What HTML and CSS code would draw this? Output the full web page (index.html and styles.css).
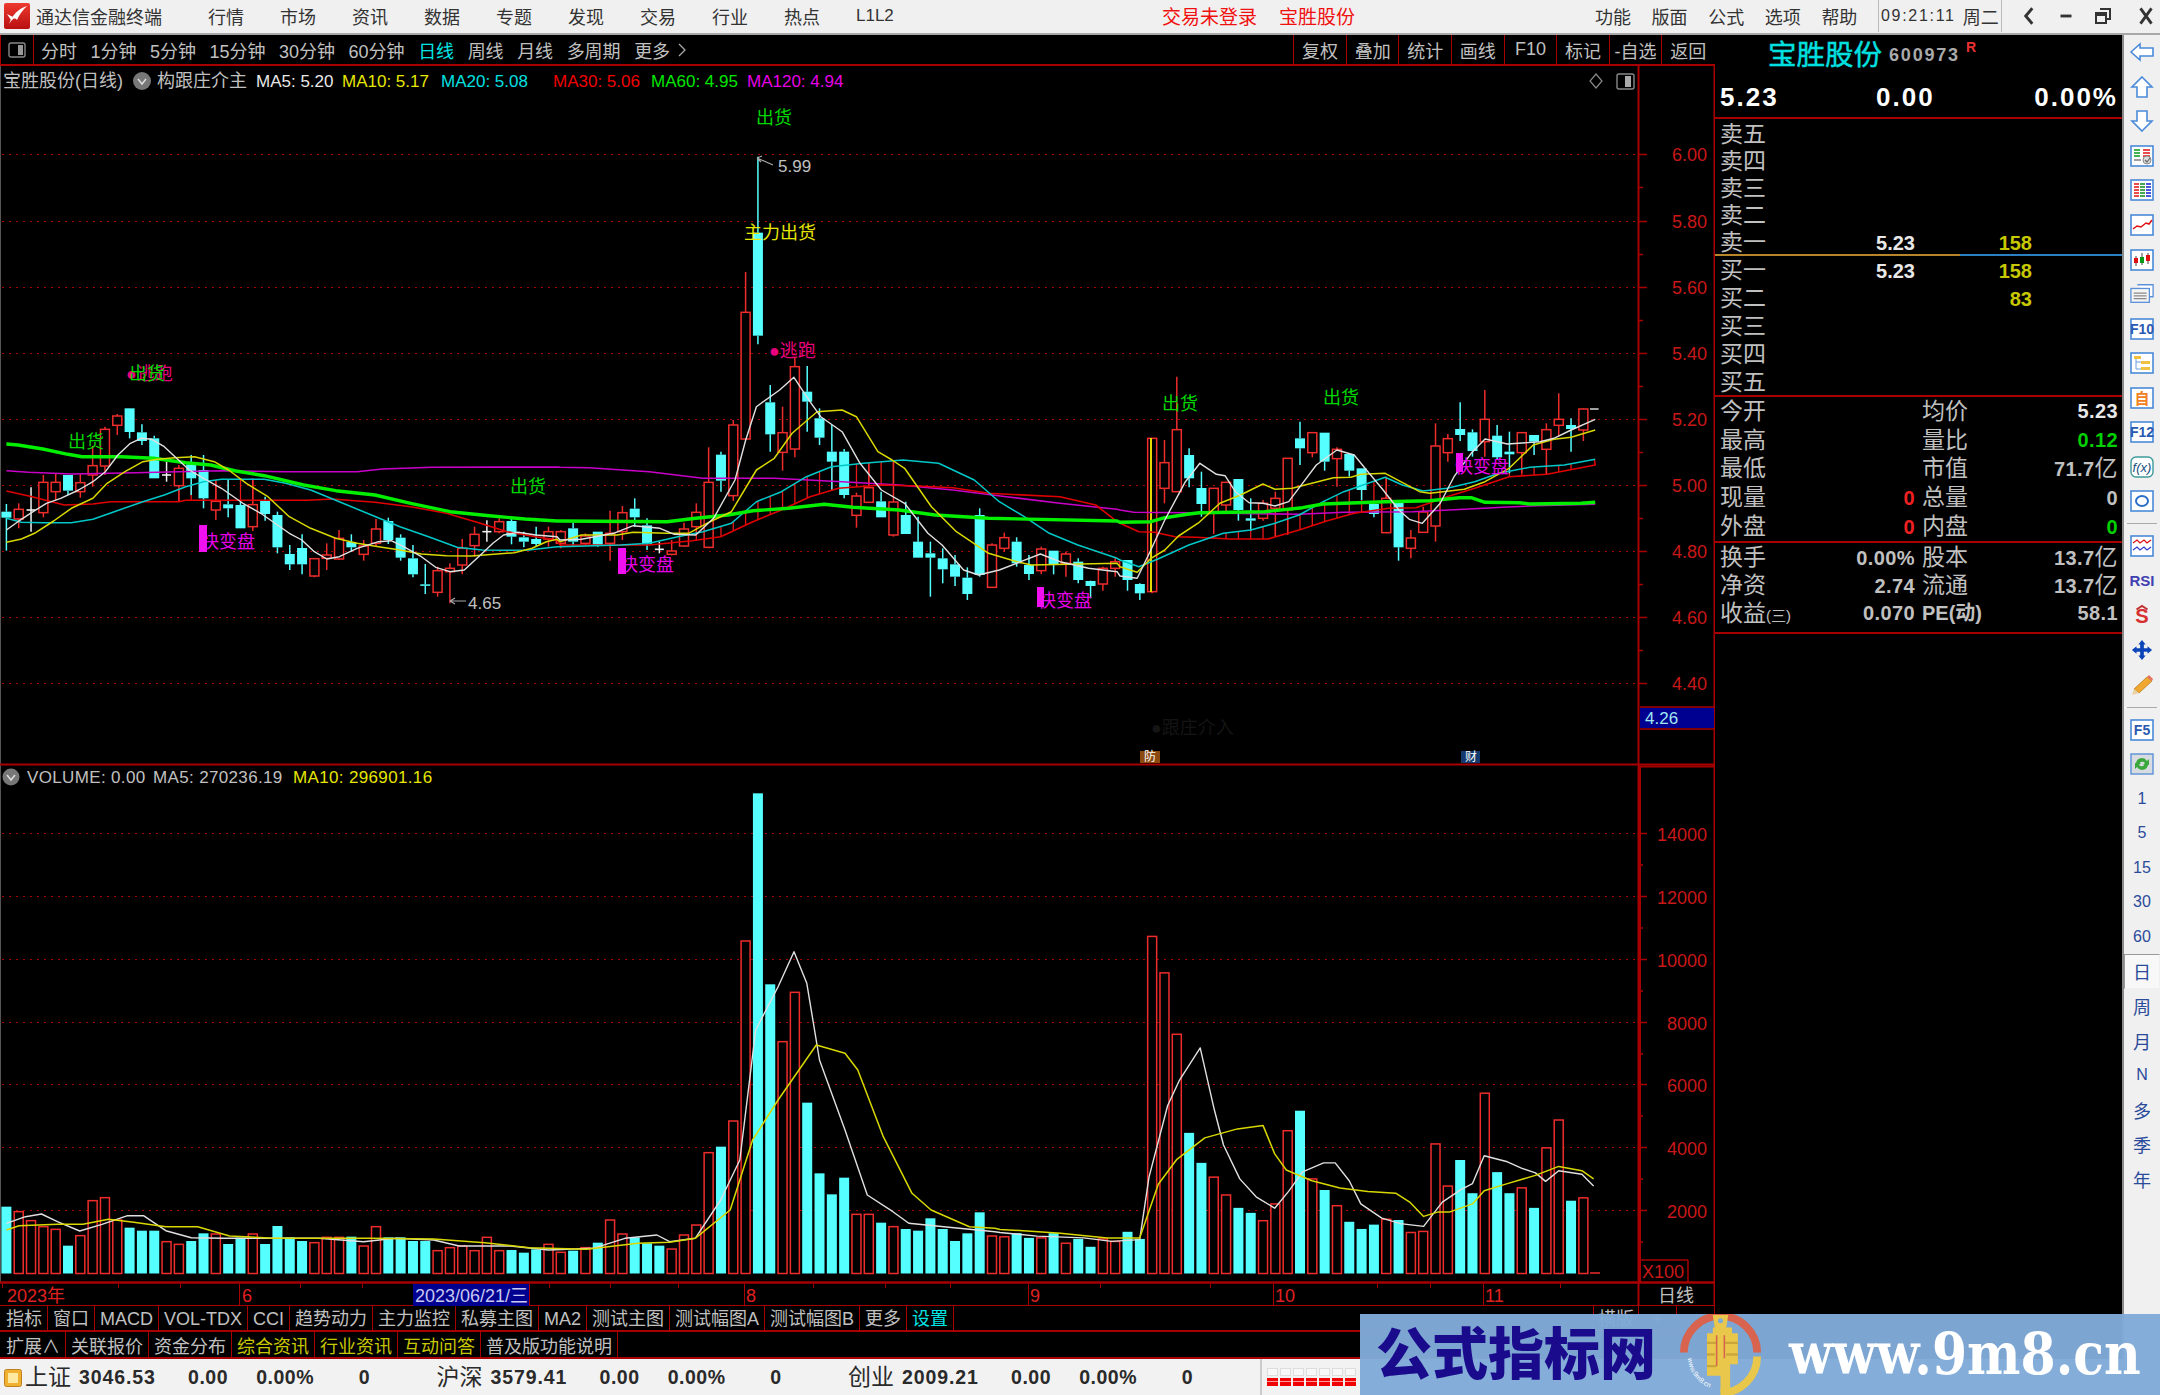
FILE: index.html
```html
<!DOCTYPE html>
<html lang="zh-CN">
<head>
<meta charset="utf-8">
<title>通达信金融终端</title>
<link rel="stylesheet" href="styles.css">
</head>
<body>
<div class="app">
  <header class="titlebar">
    <svg class="logo" viewBox="0 0 26 26"><defs><linearGradient id="lg" x1="0" y1="0" x2="0" y2="1"><stop offset="0" stop-color="#ee3a30"/><stop offset="1" stop-color="#b80f10"/></linearGradient></defs><rect width="26" height="26" rx="2" fill="url(#lg)"/><path d="M5 21 C8 12 14 6 23 3 C18 8 15 12 13 17 C11 14 8 16 5 21Z" fill="#fff"/><path d="M3 11 L9 14 L7 17Z" fill="#fff"/></svg>
    <span class="apptitle">通达信金融终端</span>
    <nav class="menu"><span>行情</span><span>市场</span><span>资讯</span><span>数据</span><span>专题</span><span>发现</span><span>交易</span><span>行业</span><span>热点</span><span>L1L2</span></nav>
    <div class="alert"><span>交易未登录</span><span>宝胜股份</span></div>
    <nav class="menu2"><span>功能</span><span>版面</span><span>公式</span><span>选项</span><span>帮助</span></nav>
    <div class="clock"><span>09:21:11</span><span>周二</span></div>
    <div class="winctl">
      <svg viewBox="0 0 16 20"><path d="M11 3 L5 10 L11 17" class="wc"/></svg>
      <svg viewBox="0 0 16 20"><path d="M3 10 H13" class="wc"/></svg>
      <svg viewBox="0 0 18 20"><path d="M6 3 H16 V13 H13 M2 7 H12 V17 H2Z M2 9 H12" class="wc thin"/></svg>
      <svg class="wc-x" viewBox="0 0 16 20"><path d="M3 3 L13 17 M13 3 L3 17" class="wc"/></svg>
    </div>
  </header>

  <main class="workspace">
    <section class="chartcol">
      <div class="toolbar">
        <div class="tb-left">
          <span class="tb-toggle"><svg viewBox="0 0 18 16"><rect x="1" y="1" width="16" height="14" rx="2" class="tg-o"/><rect x="10" y="3" width="5" height="10" class="tg-f"/></svg></span>
          <span class="tb-item">分时</span><span class="tb-item">1分钟</span><span class="tb-item">5分钟</span><span class="tb-item">15分钟</span><span class="tb-item">30分钟</span><span class="tb-item">60分钟</span><span class="tb-item on">日线</span><span class="tb-item">周线</span><span class="tb-item">月线</span><span class="tb-item">多周期</span><span class="tb-item">更多 <svg class="chev" viewBox="0 0 8 16"><path d="M1 2 L7 8 L1 14"/></svg></span>
        </div>
        <div class="tb-right"><span>复权</span><span>叠加</span><span>统计</span><span>画线</span><span>F10</span><span>标记</span><span>-自选</span><span>返回</span></div>
      </div>

      <svg id="chart" class="chart" viewBox="0 66 1715 1240" width="1715" height="1240">
        <g id="plot"></g>
        <!-- header, price pane -->
        <text class="t-gray mid" x="3" y="81">宝胜股份(日线)</text>
        <circle cx="142" cy="81" r="9" fill="#777"/><path d="M138 79 L142 84 L146 79" fill="none" stroke="#ddd" stroke-width="1.6"/>
        <text class="t-gray mid" x="157" y="81">构跟庄介主</text>
        <text class="t-white mid sm" x="256" y="81">MA5: 5.20</text>
        <text class="t-yellow mid sm" x="342" y="81">MA10: 5.17</text>
        <text class="t-cyan mid sm" x="441" y="81">MA20: 5.08</text>
        <text class="t-red mid sm" x="553" y="81">MA30: 5.06</text>
        <text class="t-green mid sm" x="651" y="81">MA60: 4.95</text>
        <text class="t-mag mid sm" x="747" y="81">MA120: 4.94</text>
        <path d="M1596 74 L1602 81 L1596 88 L1590 81Z" fill="none" stroke="#888" stroke-width="1.2"/>
        <rect x="1617" y="74" width="17" height="15" rx="2" fill="none" stroke="#888" stroke-width="1.4"/><rect x="1625" y="76" width="6" height="11" fill="#aaa"/>

        <text class="t-sig mid" x="756" y="118">出货</text>
        <text class="t-gray mid sm" x="778" y="166">5.99</text>
        <path d="M757 158 L773 165 M757 158 L762 156 M757 158 L761 162" fill="none" stroke="#aaa" stroke-width="1.2"/>
        <text class="t-yel2 mid" x="744" y="233">主力出货</text>
        <text class="t-pink mid" x="769" y="351">●逃跑</text>
        <text class="t-pink mid" x="126" y="374">●逃跑</text>
        <text class="t-sig mid" x="129" y="374">出货</text>
        <text class="t-sig mid" x="68" y="442">出货</text>
        <text class="t-sig mid" x="510" y="487">出货</text>
        <text class="t-sig mid" x="1162" y="404">出货</text>
        <text class="t-sig mid" x="1323" y="398">出货</text>
        <text class="t-gray mid sm" x="468" y="603">4.65</text>
        <path d="M450 601 H466 M450 601 L455 598 M450 601 L455 604" fill="none" stroke="#aaa" stroke-width="1.2"/>

        <text class="t-mag mid" x="201" y="542">快变盘</text><rect x="199" y="525" width="8" height="27" fill="#f010f0"/>
        <text class="t-mag mid" x="620" y="565">快变盘</text><rect x="618" y="548" width="8" height="26" fill="#f010f0"/>
        <text class="t-mag mid" x="1038" y="601">快变盘</text><rect x="1037" y="587" width="7" height="20" fill="#f010f0"/>
        <text class="t-mag mid" x="1455" y="467">快变盘</text><rect x="1456" y="453" width="7" height="19" fill="#f010f0"/>

        <text class="t-faint mid" x="1151" y="728">●跟庄介入</text>
        <rect x="1140" y="751" width="20" height="12" fill="#8a4a10"/><text class="t-tiny mid" x="1144" y="757">防</text>
        <rect x="1461" y="751" width="19" height="12" fill="#123a6e"/><text class="t-tiny mid" x="1465" y="757">财</text>

        <!-- price axis labels -->
        <g class="axis-labels">
          <text x="1707" y="155">6.00</text><text x="1707" y="222">5.80</text><text x="1707" y="288">5.60</text><text x="1707" y="354">5.40</text><text x="1707" y="420">5.20</text><text x="1707" y="486">5.00</text><text x="1707" y="552">4.80</text><text x="1707" y="618">4.60</text><text x="1707" y="684">4.40</text>
        </g>
        <rect x="1640" y="708" width="74" height="20" fill="#000090"/>
        <text class="t-cur mid sm" x="1645" y="718">4.26</text>

        <!-- volume pane -->
        <circle cx="11" cy="777" r="8.5" fill="#777"/><path d="M7 775 L11 780 L15 775" fill="none" stroke="#ddd" stroke-width="1.6"/>
        <text class="t-gray mid sm vh" x="27" y="777">VOLUME: 0.00</text>
        <text class="t-gray mid sm vh" x="153" y="777">MA5: 270236.19</text>
        <text class="t-yellow mid sm vh" x="293" y="777">MA10: 296901.16</text>
        <g class="axis-labels">
          <text x="1707" y="835">14000</text><text x="1707" y="898">12000</text><text x="1707" y="961">10000</text><text x="1707" y="1024">8000</text><text x="1707" y="1086">6000</text><text x="1707" y="1149">4000</text><text x="1707" y="1212">2000</text>
        </g>
        <text class="axis-x mid" x="1642" y="1272">X100</text>

        <!-- date axis -->
        <rect x="413" y="1284" width="116" height="22" fill="#000090"/>
        <text class="t-date mid" x="7" y="1296">2023年</text>
        <text class="t-date mid" x="242" y="1296">6</text>
        <text class="t-datesel mid" x="415" y="1296">2023/06/21/三</text>
        <text class="t-date mid" x="746" y="1296">8</text>
        <text class="t-date mid" x="1030" y="1296">9</text>
        <text class="t-date mid" x="1275" y="1296">10</text>
        <text class="t-date mid" x="1485" y="1296">11</text>
        <text class="t-gray mid" x="1658" y="1296">日线</text>
      </svg>

      <div class="tabs">
        <span>指标</span><span>窗口</span><span>MACD</span><span>VOL-TDX</span><span>CCI</span><span>趋势动力</span><span>主力监控</span><span>私募主图</span><span>MA2</span><span>测试主图</span><span>测试幅图A</span><span>测试幅图B</span><span>更多</span><span class="on">设置</span>
        <span class="tabs-end">横版</span><span class="plain">+</span><span class="plain"></span>
      </div>
      <div class="tabs">
        <span>扩展∧</span><span>关联报价</span><span>资金分布</span><span class="hl">综合资讯</span><span class="hl">行业资讯</span><span class="hl">互动问答</span><span>普及版功能说明</span>
      </div>
    </section>

    <aside class="quote">
      <div class="q-name"><b>宝胜股份</b><i>600973</i><sup>R</sup></div>
      <div class="q-price"><b>5.23</b><b>0.00</b><b>0.00%</b></div>
      <div class="book sell">
        <div><span>卖五</span></div><div><span>卖四</span></div><div><span>卖三</span></div><div><span>卖二</span></div>
        <div><span>卖一</span><b>5.23</b><em>158</em></div>
      </div>
      <div class="midline"></div>
      <div class="book buy">
        <div><span>买一</span><b>5.23</b><em>158</em></div>
        <div><span>买二</span><b></b><em>83</em></div>
        <div><span>买三</span></div><div><span>买四</span></div><div><span>买五</span></div>
      </div>
      <div class="stats five">
        <div><span>今开</span><b></b><span>均价</span><b class="w">5.23</b></div>
        <div><span>最高</span><b></b><span>量比</span><b class="g">0.12</b></div>
        <div><span>最低</span><b></b><span>市值</span><b>71.7<small>亿</small></b></div>
        <div><span>现量</span><b class="r">0</b><span>总量</span><b>0</b></div>
        <div><span>外盘</span><b class="r">0</b><span>内盘</span><b class="g">0</b></div>
      </div>
      <div class="stats three">
        <div><span>换手</span><b>0.00%</b><span>股本</span><b>13.7<small>亿</small></b></div>
        <div><span>净资</span><b>2.74</b><span>流通</span><b>13.7<small>亿</small></b></div>
        <div><span>收益<small class="paren">(三)</small></span><b>0.070</b><span class="pe">PE(动)</span><b>58.1</b></div>
      </div>
    </aside>

    <aside class="sidebar">
      <div class="si"><svg viewBox="0 0 24 20"><path class="arr" d="M1 10 L10 2 V6 H23 V14 H10 V18Z"/></svg></div>
      <div class="si"><svg viewBox="0 0 24 22"><path class="arr" d="M12 1 L22 11 H17 V21 H7 V11 H2Z"/></svg></div>
      <div class="si"><svg viewBox="0 0 24 22"><path class="arr" d="M12 21 L22 11 H17 V1 H7 V11 H2Z"/></svg></div>
      <div class="si"><svg viewBox="0 0 24 22"><rect class="fr" x="1" y="1" width="22" height="20"/><path d="M4 5 H10 M4 8 H10 M4 11 H10" stroke="#0a9a1a" stroke-width="1.6"/><path d="M13 5 H20 M13 8 H20 M13 11 H20" stroke="#e01010" stroke-width="1.6"/><path d="M4 15 H11" stroke="#888" stroke-width="1.6"/><circle cx="17" cy="15" r="4" fill="#ddd" stroke="#888"/><path d="M15 15 L17 17 L20 13" fill="none" stroke="#666" stroke-width="1.2"/></svg></div>
      <div class="si"><svg viewBox="0 0 24 22"><rect class="fr" x="1" y="1" width="22" height="20"/><path d="M4 5 H9 M4 8 H9 M4 11 H9 M4 14 H9 M4 17 H9" stroke="#e01010" stroke-width="1.6"/><path d="M10 5 H15 M10 8 H15 M10 11 H15 M10 14 H15 M10 17 H15" stroke="#0a8a1a" stroke-width="1.6"/><path d="M16 5 H21 M16 8 H21 M16 11 H21 M16 14 H21 M16 17 H21" stroke="#1020d0" stroke-width="1.6"/></svg></div>
      <div class="si"><svg viewBox="0 0 24 22"><rect class="fr" x="1" y="1" width="22" height="20"/><path d="M3 15 L7 12 L11 13 L16 9 L19 10 L22 6" fill="none" stroke="#e01010" stroke-width="1.5"/></svg></div>
      <div class="si"><svg viewBox="0 0 24 22"><rect class="fr" x="1" y="1" width="22" height="20"/><path d="M6 7 V17 M12 4 V16 M18 4 V15" stroke="#444"/><rect x="4" y="9" width="4" height="5" fill="#e01010"/><rect x="10" y="8" width="4" height="6" fill="#0a9a1a"/><rect x="16" y="6" width="4" height="6" fill="#e01010"/></svg></div>
      <div class="si"><svg viewBox="0 0 26 22"><path d="M8 1 H25 V14 H21" fill="#fff" stroke="#5a90d8" stroke-width="1.4"/><rect x="1" y="5" width="20" height="15" fill="#f4f4f4" stroke="#5a90d8" stroke-width="1.4"/><path d="M4 10 H18 M4 13 H18 M4 16 H18" stroke="#888" stroke-width="1.4"/></svg></div>
      <div class="si"><svg viewBox="0 0 24 22"><rect class="fr" x="1" y="1" width="22" height="20"/><text class="ti-t" x="12" y="16">F10</text></svg></div>
      <div class="si"><svg viewBox="0 0 24 22"><rect class="fr" x="1" y="1" width="22" height="20"/><path d="M6 5 V17 H11 M6 10 H11" fill="none" stroke="#6aa0d8"/><rect x="4" y="4" width="7" height="3" fill="#f0c040"/><rect x="11" y="9" width="9" height="3" fill="#f0c040"/><rect x="11" y="15" width="9" height="3" fill="#f0c040"/></svg></div>
      <div class="si"><svg viewBox="0 0 24 22"><rect class="fr" x="1" y="1" width="22" height="20"/><text class="ti-o" x="12" y="17">自</text></svg></div>
      <div class="si"><svg viewBox="0 0 24 22"><rect class="fr" x="1" y="1" width="22" height="20"/><text class="ti-t" x="12" y="16">F12</text></svg></div>
      <div class="si"><svg viewBox="0 0 24 22"><rect x="1" y="1" width="22" height="20" rx="5" fill="#fff" stroke="#3f9a9a" stroke-width="1.4"/><text class="ti-f" x="12" y="16">f(x)</text></svg></div>
      <div class="si"><svg viewBox="0 0 24 22"><rect class="fr" x="1" y="1" width="22" height="20"/><ellipse cx="12" cy="11" rx="6" ry="5" fill="none" stroke="#2a70c8" stroke-width="2"/></svg></div>
      <div class="sep"></div>
      <div class="si"><svg viewBox="0 0 24 22"><rect class="fr" x="1" y="1" width="22" height="20"/><path d="M3 8 L7 5 L10 8 L14 5 L17 8 L21 5" fill="none" stroke="#e01010" stroke-width="1.3"/><path d="M3 15 L7 12 L10 15 L14 12 L17 15 L21 12" fill="none" stroke="#3040d0" stroke-width="1.3"/></svg></div>
      <div class="si"><span class="rsi">RSI</span></div>
      <div class="si"><svg viewBox="0 0 24 24"><text class="ti-s" x="12" y="20">S</text><path d="M6 5 L12 1 L18 5" fill="none" stroke="#c03030" stroke-width="2"/></svg></div>
      <div class="si"><svg viewBox="0 0 24 24"><path d="M12 1 L16 6 H14 V10 H18 V8 L23 12 L18 16 V14 H14 V18 H16 L12 23 L8 18 H10 V14 H6 V16 L1 12 L6 8 V10 H10 V6 H8Z" fill="#0a44b8"/></svg></div>
      <div class="si"><svg viewBox="0 0 24 22"><path d="M4 15 L17 3 L22 7 L9 19Z" fill="#f0a830" stroke="#b8801e" stroke-width=".8"/><path d="M4 15 L2 21 L9 19Z" fill="#e8d0a0"/><path d="M17 3 L22 7 L23 5 L19 1Z" fill="#e87060"/></svg></div>
      <div class="sep"></div>
      <div class="si"><svg viewBox="0 0 24 22"><rect class="fr" x="1" y="1" width="22" height="20"/><text class="ti-t" x="12" y="16">F5</text></svg></div>
      <div class="si"><svg viewBox="0 0 24 22"><rect x="1" y="1" width="22" height="20" fill="#d8dce0" stroke="#5a90d8" stroke-width="1.4"/><path d="M6 10 A6 6 0 0 1 17 8 L19 6 V12 H13 L15 10 A3.5 3.5 0 0 0 9 11Z M18 12 A6 6 0 0 1 7 14 L5 16 V10 H11 L9 12 A3.5 3.5 0 0 0 15 11Z" fill="#3aa83a"/></svg></div>
      <div class="si tx">1</div><div class="si tx">5</div><div class="si tx">15</div><div class="si tx">30</div><div class="si tx">60</div>
      <div class="si tx cj sel">日</div><div class="si tx cj">周</div><div class="si tx cj">月</div><div class="si tx">N</div><div class="si tx cj">多</div><div class="si tx cj">季</div><div class="si tx cj">年</div>
    </aside>
  </main>

  <footer class="statusbar">
    <svg class="st-ico" viewBox="0 0 18 18"><rect x="0.5" y="0.5" width="17" height="17" rx="2" fill="#f0b030" stroke="#c08020"/><rect x="4" y="4" width="10" height="10" fill="#ffe9a0"/></svg>
    <div class="idx"><span>上证</span><b>3046.53</b><b>0.00</b><b>0.00%</b><b>0</b></div>
    <div class="idx"><span>沪深</span><b>3579.41</b><b>0.00</b><b>0.00%</b><b>0</b></div>
    <div class="idx"><span>创业</span><b>2009.21</b><b>0.00</b><b>0.00%</b><b>0</b></div>
    <div class="meter">
      <div class="m-row"><i></i><i></i><i></i><i></i><i></i><i></i><i></i></div>
      <div class="m-row red"><i></i><i></i><i></i><i></i><i></i><i></i><i></i></div>
    </div>
  </footer>

  <div class="watermark">
    <span class="wm-cn">公式指标网</span>
    <svg class="wm-logo" viewBox="0 0 84 84">
      <path d="M4 40 A38 38 0 0 1 80 40" fill="none" stroke="#d8634e" stroke-width="8"/>
      <path d="M80 44 A38 38 0 0 1 42 82" fill="none" stroke="#e8c74a" stroke-width="8"/>
      <defs><path id="wmarc" d="M8 46 A36 36 0 0 0 36 78"/></defs>
      <text class="wm-small"><textPath href="#wmarc">www.9m8.cn</textPath></text>
      <path d="M34 1 H50 L48 14 H54 V20 H60 V52 H52 V82 H42 V64 H28 V20 H34 V14 H36Z" fill="#e8c74a"/>
      <circle cx="42" cy="7" r="2.6" fill="#80aad8"/>
      <path d="M28 30 H38 M46 30 H60 M28 42 H36 M48 42 H60 M28 54 H38" stroke="#c9a63a" stroke-width="2.4"/>
      <path d="M38 22 V54 M46 22 V46" stroke="#d8634e" stroke-width="1.6"/>
    </svg>
    <span class="wm-url">www.9m8.cn</span>
  </div>
</div>
<script src="chart.js"></script>
</body>
</html>
```

FILE: styles.css
```css
* { box-sizing: border-box; }
html, body { margin: 0; padding: 0; background: #000; }
body {
  width: 2160px; height: 1395px; overflow: hidden;
  font-family: "Liberation Sans", "Noto Sans CJK SC", sans-serif;
  font-size: 18px; color: #c0c0c0;
}
.app { position: relative; width: 2160px; height: 1395px; display: flex; flex-direction: column; }

/* title bar */
.titlebar { height: 35px; flex: none; background: #f0f0f0; border-bottom: 2px solid #a8a8a8; display: flex; align-items: center; color: #333; padding: 0 0 2px 4px; }
.logo { width: 26px; height: 26px; flex: none; }
.apptitle { margin-left: 6px; width: 172px; flex: none; }
.menu { display: flex; align-items: center; flex: none; width: 954px; }
.menu span { width: 72px; }
.menu span:last-child { font-size: 17px; }
.alert { display: flex; gap: 22px; color: #f01010; width: 433px; flex: none; }
.alert span { font-size: 19px; }
.menu2 { display: flex; width: 283px; flex: none; }
.menu2 span { width: 57px; }
.clock { display: flex; align-items: center; height: 33px; width: 124px; flex: none; border-left: 1px solid #bbb; border-right: 1px solid #bbb; padding-left: 2px; gap: 7px; }
.clock span:first-child { font-size: 16px; letter-spacing: 1.7px; }
.winctl { display: flex; align-items: center; margin-left: 18px; gap: 19px; }
.winctl svg { width: 18px; height: 22px; }
.winctl .wc-x { margin-left: 6px; }
.wc { fill: none; stroke: #333; stroke-width: 2.6; }
.wc.thin { stroke-width: 2; }

/* layout */
.workspace { flex: none; height: 1324px; display: flex; background: #000; }
.chartcol { width: 1715px; flex: none; display: flex; flex-direction: column; }

/* toolbar */
.toolbar { height: 31px; flex: none; display: flex; justify-content: space-between; border-bottom: 2px solid #a80000; border-left: 1px solid #a80000; }
.tb-left { display: flex; align-items: center; }
.tb-toggle { width: 33px; height: 100%; border-right: 1px solid #a80000; display: flex; align-items: center; justify-content: center; margin-right: 7px; }
.tb-toggle svg { width: 18px; height: 16px; }
.tg-o { fill: none; stroke: #888; stroke-width: 1.4; }
.tg-f { fill: #999; }
.tb-item { margin-right: 13.5px; white-space: nowrap; display: flex; align-items: center; gap: 8px; }
.tb-item.on { color: #00e6e6; }
.chev { width: 8px; height: 16px; fill: none; stroke: #aaa; stroke-width: 1.3; }
.tb-right { display: flex; height: 100%; margin-right: 1px; }
.tb-right span { width: 52.6px; border-left: 1px solid #a80000; display: flex; align-items: center; justify-content: center; }

/* chart */
.chart { display: block; flex: none; font-size: 18px; }
.chart text.mid { dominant-baseline: central; }
.chart .sm { font-size: 17px; }
.chart .vh { letter-spacing: .35px; }
.t-gray { fill: #c0c0c0; }
.t-white { fill: #e8e8e8; }
.t-yellow { fill: #e6e600; }
.t-cyan { fill: #00e0e0; }
.t-red { fill: #f00000; }
.t-green { fill: #00e600; }
.t-mag { fill: #e600e6; }
.t-sig { fill: #00d800; }
.t-yel2 { fill: #e6e600; }
.t-pink { fill: #e8007c; }
.t-faint { fill: #141414; }
.t-tiny { fill: #fff; font-size: 12px; }
.t-cur { fill: #a0e8f0; }
.t-date { fill: #e02020; }
.t-datesel { fill: #c8c8f0; }
.axis-labels text { fill: #c81818; text-anchor: end; dominant-baseline: central; font-size: 18px; }
.axis-x { fill: #c81818; }

/* bottom tabs */
.tabs { height: 26px; flex: none; display: flex; border-bottom: 2px solid #a80000; padding-left: 1px; line-height: 27px; }
.tabs + .tabs { height: 27px; line-height: 30px; }
.tabs span { padding: 0 5px; border-right: 1px solid #a80000; white-space: nowrap; }
.tabs .on { color: #00e6e6; }
.tabs .hl { color: #c8c800; }
.tabs .tabs-end { margin-left: auto; border-left: 1px solid #a80000; padding: 0 4px; }
.tabs .plain { width: 38px; text-align: center; }

/* quote panel */
.quote { width: 407px; flex: none; display: flex; flex-direction: column; font-size: 23px; }
.q-name { height: 40px; flex: none; display: flex; align-items: center; padding: 0 0 5px 53px; }
.q-name b { font-weight: 400; font-size: 28.5px; color: #00e0e0; -webkit-text-stroke: .4px #00e0e0; }
.q-name i { font-style: normal; font-weight: 700; font-size: 18px; letter-spacing: 1.8px; color: #aaa; margin-left: 7px; margin-top: 6px; }
.q-name sup { font-size: 14px; font-weight: 700; color: #e83030; margin-left: 6px; margin-top: -12px; }
.q-price { height: 44px; flex: none; display: grid; grid-template-columns: 156px 1fr auto; align-items: center; padding: 2px 4px 0 5px; border-bottom: 2px solid #a80000; }
.q-price b { font-size: 26px; color: #fff; letter-spacing: 2px; }
.book { flex: none; display: flex; flex-direction: column; padding-left: 5px; }
.book > div { flex: 1; display: grid; grid-template-columns: 60px 135px 117px; align-items: center; line-height: 1; }
.sell > div { padding-top: 4px; }
.buy > div { padding-top: 2px; }
.book b { font-size: 20px; color: #e8e8e8; text-align: right; }
.book em { font-size: 20px; font-weight: 700; font-style: normal; color: #c8c800; text-align: right; }
.sell { height: 135px; }
.buy { height: 139px; }
.midline { height: 2px; flex: none; background: linear-gradient(to right, #b8862a 0 245px, #2a80c0 245px); }
.stats { flex: none; border-top: 2px solid #a80000; display: flex; flex-direction: column; padding: 0 4px 0 5px; }
.five { height: 146px; }
.three { height: 93px; padding-top: 1px; padding-bottom: 5px; border-bottom: 2px solid #a80000; }
.stats > div { flex: 1; display: grid; grid-template-columns: 100px 95px 7px 60px 1fr; align-items: center; line-height: 1; white-space: nowrap; }
.stats > div > :nth-child(1) { grid-column: 1; }
.stats > div > :nth-child(2) { grid-column: 2; }
.stats > div > :nth-child(3) { grid-column: 4; }
.stats > div > :nth-child(4) { grid-column: 5; }
.stats b { font-size: 20px; color: #c0c0c0; text-align: right; letter-spacing: .4px; }
.stats small { font-size: 23px; font-weight: 400; }
.stats small.paren { font-size: 15px; }
.stats .w { color: #e8e8e8; }
.stats .r { color: #f02020; }
.stats .g { color: #00d000; }
.stats .pe { font-size: 20px; font-weight: 700; }

/* side toolbar */
.sidebar { width: 38px; flex: none; background: #f0f0f0; border-left: 2px solid #8a8a8a; display: flex; flex-direction: column; align-items: center; overflow: hidden; }
.si { height: 34.55px; width: 100%; flex: none; display: flex; align-items: center; justify-content: center; }
.si svg { width: 24px; height: 22px; overflow: visible; }
.arr { fill: #fff; stroke: #4a8ad8; stroke-width: 1.6; }
.fr { fill: #fff; stroke: #4a8ad8; stroke-width: 1.6; }
.ti-t { font-size: 14px; font-weight: 700; fill: #2a5ab0; text-anchor: middle; }
.ti-o { font-size: 15px; font-weight: 700; fill: #f08020; text-anchor: middle; }
.ti-f { font-size: 13px; font-style: italic; fill: #205080; text-anchor: middle; }
.ti-s { font-size: 22px; font-weight: 700; fill: #d83030; text-anchor: middle; }
.rsi { font-size: 15px; font-weight: 700; color: #4040b0; }
.sep { height: 10.5px; width: 30px; flex: none; display: flex; align-items: center; }
.sep::after { content: ""; display: block; width: 100%; height: 1px; background: #aaa; }
.tx { color: #2a4a9a; font-size: 16px; }
.cj { font-size: 18px; }
.sel { background: #f8f8f8; border: 1px solid; border-color: #999 #f0f0f0 #f0f0f0 #999; }

/* status bar */
.statusbar { flex: 1; background: #f2f2f2; display: flex; align-items: center; color: #2a2a2a; padding-left: 4px; position: relative; }
.st-ico { width: 18px; height: 18px; flex: none; margin-right: 3px; margin-top: 2px; }
.idx { width: 411.5px; flex: none; display: grid; grid-template-columns: 54px 76px 73px 86px 56px; align-items: center; }
.idx span { font-size: 23px; line-height: 1; }
.idx b { font-size: 19.5px; text-align: right; font-weight: 700; letter-spacing: .5px; }
.idx b:nth-child(2) { text-align: left; letter-spacing: .9px; }
.meter { padding-left: 5px; border-left: 2px solid #ccc; height: 36px; display: flex; flex-direction: column; justify-content: center; gap: 2px; margin-left: 0; }
.m-row { display: flex; gap: 2px; }
.m-row i { width: 11px; height: 8px; border: 1px solid #ddd; background: #f8f8f8; }
.m-row.red i { border: 0; background: linear-gradient(to bottom, #f00000 0 3px, #ff9a9a 3px 4px, #f00000 4px); }

/* watermark */
.watermark { position: absolute; left: 1360px; top: 1314px; width: 800px; height: 81px; background: rgba(128,170,216,.97); display: flex; align-items: center; overflow: hidden; }
.wm-cn { font-size: 56px; font-weight: 900; color: #1a0a8c; line-height: 1; margin-left: 16px; width: 304px; flex: none; }
.wm-logo { width: 81px; height: 81px; flex: none; }
.wm-small { font-size: 7px; fill: #fff; }
.wm-url { font-family: "DejaVu Serif", serif; font-weight: 700; font-size: 50.5px; line-height: 1; color: #fff; margin-left: 28px; white-space: nowrap; transform: scaleY(1.15); transform-origin: center; }
```

FILE: chart.js
```js
(function () {
  var NS = "http://www.w3.org/2000/svg";
  var plot = document.getElementById("plot");
  var RED = "#ee2c2c", CY = "#55ffff", GRID = "#a80000";
  function el(n, a) {
    var e = document.createElementNS(NS, n);
    for (var k in a) e.setAttribute(k, a[k]);
    plot.appendChild(e);
    return e;
  }
  function line(x1, y1, x2, y2, c, w, dash) {
    var a = { x1: x1, y1: y1, x2: x2, y2: y2, stroke: c, "stroke-width": w || 1 };
    if (dash) a["stroke-dasharray"] = dash;
    return el("line", a);
  }
  var bx = function (i) { return 6.4 + i * 12.32; };

  /* grid and axes */
  [154, 221, 287, 353, 419, 485, 551, 617, 683].forEach(function (y, i) {
    line(2, y + .5, 1638, y + .5, GRID, 1, "2 5");
    line(1638, y + .5, 1647, y + .5, GRID, 1.5);
    if (i < 8) line(1638, y + 33.5, 1643, y + 33.5, GRID, 1.5);
  });
  [834, 897, 960, 1023, 1085, 1148, 1211].forEach(function (y) {
    line(2, y - .5, 1638, y - .5, GRID, 1, "2 5");
    line(1638, y - .5, 1647, y - .5, GRID, 1.5);
    line(1638, y + 31, 1643, y + 31, GRID, 1.5);
  });
  line(.5, 66, .5, 1282, "#555", 1);
  line(1638.5, 66, 1638.5, 1306, GRID, 2);
  line(1714.5, 66, 1714.5, 1306, GRID, 2);
  line(1640, 707, 1714, 707, GRID, 1.5);
  line(1640, 729, 1714, 729, GRID, 1.5);
  line(0, 764.5, 1714, 764.5, GRID, 2);
  line(1640, 766.5, 1714, 766.5, GRID, 2);
  line(1640, 766, 1640, 1282, GRID, 2);
  line(1640, 1260, 1688, 1260, GRID, 1.5);
  line(1688, 1260, 1688, 1282, GRID, 1.5);
  line(0, 1282.5, 1714, 1282.5, GRID, 2.5);
  line(0, 1305.5, 1715, 1305.5, GRID, 1);
  [239, 413, 529, 744, 1028, 1273, 1483].forEach(function (x) { line(x + .5, 1284, x + .5, 1305, GRID, 1); });
  [2, 118, 180, 239, 300, 362, 413, 549, 610, 678, 744, 813, 885, 950, 1028, 1100, 1210, 1273, 1377, 1430, 1483, 1560].forEach(function (x) {
    line(x + .5, 1284, x + .5, 1288, GRID, 1);
  });

  /* curve data: [px = offset + v / scale] as read off the chart */
  function poly(parts) {
    var pts = [];
    parts.forEach(function (p) {
      for (var i = 0; i < p.pts.length; i += 2) {
        pts.push([p.x0 + p.pts[i] / p.sx, p.y0 + p.pts[i + 1] / p.sy]);
      }
    });
    return pts;
  }
  function Z(x0, sx, y0, sy, pts) { return { x0: x0, sx: sx, y0: y0, sy: sy, pts: pts }; }
  function A(p) { return Z(0, 2.8, 340, 3, p); }
  function B(p) { return Z(560, 2.8, 100, 3, p); }
  function C(p) { return Z(1120, 2.904, 360, 3, p); }
  function V(p) { return Z(0, 1.568, 760, 3, p); }
  function W(p) { return Z(1000, 2.148, 720, 2.8, p); }

  var ma = {
    white: poly([A([18,570,50,545,85,520,130,490,170,475,220,450,260,425,295,395,330,345,365,310,395,295,425,298,460,320,490,350,530,390,570,415,620,445,680,490,730,520,770,550,810,580,845,600,880,635,915,657,950,650,1000,625,1060,605,1095,602,1130,620,1180,650,1220,682,1260,695,1300,690,1340,650,1380,610,1410,585,1450,577,1500,585,1560,590]),
      B([0,1320,60,1318,150,1300,205,1277,280,1285,320,1303,380,1305,430,1255,490,1140,520,1020,550,920,615,870,655,832,700,905,730,950,790,995,840,1090,900,1170,965,1210,1030,1300,1070,1335,1130,1410,1172,1425,1230,1410,1290,1385,1345,1362,1400,1385,1480,1405,1560,1415]),
      C([0,648,50,655,85,580,130,480,190,365,232,310,280,343,305,347,335,395,375,428,415,430,450,438,490,425,530,370,570,315,630,270,680,285,720,335,760,385,810,450,840,478,878,490,930,430,970,350,1020,280,1060,237,1125,252,1220,245,1260,235,1310,210,1380,178])]),
    yellow: poly([A([18,607,60,597,100,578,150,543,200,505,260,475,300,430,350,395,400,365,440,358,490,353,545,350,600,365,640,390,690,430,750,470,810,530,870,565,940,595,1000,610,1060,620,1120,630,1180,642,1250,647,1320,648,1440,638,1490,625,1530,605,1560,598]),
      B([0,1325,60,1305,160,1305,205,1297,300,1300,360,1300,420,1265,480,1235,550,1110,600,1075,650,1000,720,935,790,930,830,950,890,1055,930,1080,965,1105,1040,1220,1110,1295,1200,1360,1280,1385,1320,1395,1560,1390]),
      C([0,620,50,637,90,595,130,570,170,528,230,487,290,430,350,405,415,372,450,388,500,385,620,353,670,352,700,343,770,340,870,395,900,400,1000,388,1060,365,1130,325,1200,255,1260,238,1310,232,1380,210])]),
    cyan: poly([A([18,535,60,547,120,548,200,548,260,538,320,515,400,485,460,465,520,440,570,425,620,418,740,418,800,430,870,450,950,485,1040,525,1120,560,1200,590,1280,622,1350,630,1420,631,1480,630,1560,620]),
      B([0,1340,170,1335,250,1330,330,1310,400,1295,480,1270,550,1205,620,1175,690,1130,760,1100,850,1090,960,1080,1060,1090,1160,1140,1230,1205,1300,1250,1370,1300,1450,1335,1560,1375]),
      C([0,600,55,620,110,597,200,555,300,520,380,510,450,490,520,465,590,425,650,395,770,352,820,375,880,393,950,385,1030,365,1100,340,1190,322,1290,315,1380,298])]),
    red: poly([A([18,453,90,470,180,495,260,492,310,485,500,485,520,481,860,481,930,477,1050,487,1150,500,1250,520,1340,548,1420,575,1500,590,1560,600]),
      B([0,1335,250,1335,370,1322,450,1310,540,1265,620,1230,700,1190,780,1165,900,1155,1000,1158,1100,1163,1200,1180,1400,1190,1500,1215,1560,1265]),
      C([0,490,55,515,100,517,160,530,220,532,320,537,430,537,520,510,600,483,680,460,780,445,860,443,950,410,1030,385,1130,350,1240,343,1380,315,1378,300])]),
    green: poly([A([18,312,50,315,120,327,190,343,230,350,340,350,430,355,520,368,590,375,660,393,740,407,850,435,940,452,1050,465,1150,490,1260,515,1370,527,1470,537,1560,543]),
      B([0,1263,300,1265,380,1255,470,1245,540,1232,640,1225,740,1213,820,1222,950,1230,1050,1245,1200,1255,1560,1263]),
      C([0,487,90,485,130,473,200,462,230,458,420,455,530,443,590,432,770,425,900,422,985,413,1020,413,1060,427,1160,428,1190,432,1340,430,1380,427])]),
    mag: poly([A([18,392,80,397,200,402,380,398,620,392,800,395,1000,395,1070,387,1210,382,1560,381]),
      B([0,1102,80,1103,250,1115,400,1135,600,1135,790,1145,950,1155,1100,1170,1250,1190,1400,1210,1560,1228]),
      C([0,450,40,457,200,458,520,463,650,457,850,455,1000,448,1110,442,1210,437,1380,433])])
  };
  function at(pts, x) {
    for (var i = 1; i < pts.length; i++) {
      if (x <= pts[i][0] && pts[i][0] > pts[i - 1][0]) {
        return pts[i - 1][1] + (pts[i][1] - pts[i - 1][1]) * (x - pts[i - 1][0]) / (pts[i][0] - pts[i - 1][0]);
      }
    }
    return pts[pts.length - 1][1];
  }
  function drawPoly(pts, c, w) {
    el("polyline", { points: pts.map(function (p) { return p[0].toFixed(1) + "," + p[1].toFixed(1); }).join(" "), fill: "none", stroke: c, "stroke-width": w, "stroke-linejoin": "round" });
  }

  /* hatching between the MA20 and MA30 ribbons */
  [[14, 20], [55, 72], [98, 112], [122, 127]].forEach(function (r) {
    for (var i = r[0]; i <= r[1]; i++) {
      var x = bx(i);
      line(x, at(ma.cyan, x), x, at(ma.red, x), "#e81818", 1.3);
    }
  });

  /* candles: type high bodyTop bodyBottom low */
  function candles(y0, str, first) {
    str.split(",").forEach(function (s, k) {
      var f = s.trim().split(/\s+/), t = f[0], v = f.slice(1).map(function (n) { return y0 + n / 3; });
      var x = bx(first + k), c = t === "r" ? RED : t === "c" ? CY : "#f0f0f0";
      line(x, v[0], x, v[1], c, 1.5);
      line(x, v[2], x, v[3], c, 1.5);
      if (t === "c") el("rect", { x: x - 5, y: v[1], width: 10, height: Math.max(v[2] - v[1], 1.5), fill: CY });
      else if (t === "r") el("rect", { x: x - 4.5, y: v[1], width: 9, height: v[2] - v[1], fill: "#000", stroke: RED, "stroke-width": 1.5 });
      else { line(x - 4.5, v[1], x + 4.5, v[1], c, 1.6); line(x, v[1], x, v[2], c, 1.5); }
    });
  }
  candles(340, "c 492 515 533 632,r 490 508 537 565,w 442 510 510 575,r 405 427 518 532,r 400 427 455 480,c 405 405 452 465,r 400 428 455 473,r 318 377 405 440,r 260 268 378 405,r 222 228 256 285,c 205 205 276 295,c 253 277 303 315,c 287 295 415 415,w 365 405 405 425,r 375 385 437 485,c 345 373 415 465,c 345 390 475 505,r 420 484 510 540,c 418 493 505 532,c 485 495 565 565,r 415 494 560 573,c 470 480 522 542,c 515 525 622 640,c 615 642 673 690,c 583 624 673 703,r 655 656 708 712,r 610 645 655 690,r 570 595 657 660,c 583 606 622 635,r 600 618 643 662,r 537 567 610 620,c 533 543 600 612,c 583 593 653 662,c 615 655 703 712,c 672 733 737 762,r 680 692 757 770,r 670 685 695 790,r 597 625 675 703,r 560 583 617 650,w 541 575 575 605,r 535 545 575 580,c 535 543 590 613,c 575 592 605 622,c 560 597 612 620,r 560 575 597 620", 0);
  candles(100, "r 1290 1295 1330 1345,c 1268 1285 1325 1340,r 1300 1308 1330 1335,c 1295 1295 1335 1340,r 1232 1300 1330 1382,r 1218 1238 1295 1320,c 1195 1226 1252 1280,c 1255 1276 1333 1350,w 1325 1348 1348 1360,r 1320 1353 1363 1366,r 1268 1287 1338 1340,r 1210 1237 1280 1305,r 1042 1147 1342 1345,c 1055 1064 1142 1175,r 960 975 1187 1203,r 516 637 1017 1020,c 170 398 707 733,c 855 907 1003 1055,r 920 998 1057 1112,r 770 800 1047 1072,c 798 875 905 995,c 925 955 1013 1035,c 975 1055 1085 1170,c 1047 1055 1185 1195,r 1178 1188 1246 1283,r 1090 1163 1207 1207,c 1175 1204 1252 1252,r 1080 1206 1305 1310,c 1205 1245 1302 1302,c 1250 1325 1373 1373,c 1325 1360 1373 1490,c 1345 1375 1408 1450,c 1365 1393 1430 1458,c 1402 1433 1482 1500,c 1225 1245 1425 1430,r 1330 1335 1462 1462,r 1298 1313 1345 1355,c 1312 1325 1390 1400,c 1365 1395 1422 1440,r 1340 1347 1412 1422,c 1352 1352 1395 1423,r 1355 1362 1390 1430,c 1375 1385 1440 1450,c 1442 1443 1458 1495,r 1400 1405 1452 1472,r 1370 1385 1405 1430", 45);
  candles(360, "c 600 600 660 692,c 670 672 700 720,r 235 235 695 700,r 240 308 385 430,r 50 209 395 395,c 265 285 355 382,c 335 384 432 470,r 385 385 455 522,r 365 367 435 460,c 357 357 450 482,c 415 475 482 512,r 420 430 475 482,r 395 415 445 530,r 295 295 450 525,c 185 235 265 315,r 218 218 278 292,c 218 218 305 332,r 262 268 296 380,c 280 282 332 350,c 325 325 390 420,c 430 432 462 472,r 350 415 518 520,c 425 425 562 602,r 510 534 565 595,r 440 456 517 517,r 190 258 498 545,r 222 236 278 305,c 127 207 225 243,c 208 217 273 290,r 90 178 245 290,c 195 227 292 300,c 215 275 283 340,r 218 218 278 340,c 225 225 245 285,r 190 209 268 345,r 100 178 196 228,c 175 195 207 275,r 145 147 210 243", 91);
  line(1151, 438, 1151, 592, "#e6d800", 2);
  line(1590, 409, 1598.6, 409, "#c8c8c8", 1.6);

  drawPoly(ma.mag, "#c800c8", 1.6);
  drawPoly(ma.red, "#e00000", 1.6);
  drawPoly(ma.cyan, "#00c8c8", 1.5);
  drawPoly(ma.green, "#00f000", 3.4);
  drawPoly(ma.yellow, "#d8d800", 1.5);
  drawPoly(ma.white, "#e0e0e0", 1.4);

  /* volume bars */
  var BASE = 1273.5;
  function vols(first, str, toY) {
    str.trim().split(/\s+/).forEach(function (s, k) {
      var x = bx(first + k), y = toY(+s.slice(1));
      if (s[0] === "c") el("rect", { x: x - 5, y: y, width: 10, height: BASE - y, fill: CY });
      else el("rect", { x: x - 4.5, y: y, width: 9, height: BASE - y, fill: "#000", stroke: RED, "stroke-width": 1.5 });
    });
  }
  vols(0, "c1340 r1355 r1382 r1400 r1408 c1457 r1427 r1322 r1313 r1380 c1403 c1412 c1412 r1445 r1453 c1443 c1420 r1422 c1452 c1433 r1422 c1452 c1398 c1432 c1443 r1448 r1432 r1432 c1430 r1458 r1400 c1432 c1432 c1443 c1443 r1472 r1463 r1458 r1472 r1432 r1472 c1470 c1478 c1468 r1453 r1477 c1472 r1463 c1448 r1380 r1422 c1432 c1450 c1457 r1467 r1425 r1395 r1178 c1160 r1083 r543 c100 c673 r845 r697 c1028 c1240 c1303 c1253 r1363 r1363 c1388 r1400 c1407 c1412 c1375 c1407 c1443 c1420 c1357 r1428", function (v) { return 760 + v / 3; });
  vols(81, "r1447 c1437 c1450 r1450 c1437 r1465 c1453 c1475 r1453 r1460 c1433 c1453 r606 r708 r880 c1156 c1240 r1280 r1330 c1366 c1380 r1402 r1355 r1150 c1094 r1285 c1316 r1360 c1405 c1425 c1413 r1398 c1400 r1435 r1432 r1187 r1305 c1232 c1325 r1045 c1266 c1325 r1310 c1366 r1198 r1120 c1346 r1338", function (v) { return 720 + v / 2.8; });
  line(1590, 1273, 1600, 1273, RED, 1.5);

  drawPoly(poly([V([10,1390,40,1370,65,1362,90,1385,125,1413,160,1393,200,1367,225,1367,260,1412,300,1433,350,1435,400,1435,500,1435,570,1445,620,1435,680,1440,720,1458,800,1458,860,1470,930,1465,980,1435,1030,1425,1050,1445,1090,1435,1130,1320,1160,1200,1185,810,1220,680,1245,575,1265,670,1285,900,1325,1110,1360,1305,1400,1355,1425,1390,1480,1400,1560,1415]),
    W([0,1435,80,1445,180,1450,240,1460,300,1455,320,1280,360,1080,385,1010,430,918,460,1090,480,1190,515,1285,550,1335,590,1367,620,1320,650,1265,695,1240,720,1240,750,1290,775,1355,820,1395,860,1410,910,1418,950,1350,990,1315,1015,1298,1040,1220,1090,1237,1120,1255,1150,1268,1172,1292,1200,1262,1250,1272,1275,1305])]), "#e0e0e0", 1.4);
  drawPoly(poly([V([10,1410,30,1397,90,1393,130,1393,170,1378,210,1387,260,1400,310,1400,360,1428,430,1435,580,1435,680,1437,760,1448,830,1463,920,1468,1000,1450,1050,1447,1090,1435,1145,1350,1180,1140,1220,1020,1280,855,1325,880,1345,930,1385,1130,1430,1300,1460,1350,1520,1400,1560,1405]),
    W([0,1427,50,1430,130,1437,230,1450,300,1450,340,1300,380,1230,440,1170,510,1145,565,1135,590,1215,615,1260,670,1290,730,1310,790,1320,850,1325,880,1350,910,1390,940,1378,965,1378,1015,1355,1040,1318,1090,1298,1150,1275,1200,1250,1250,1262,1275,1285])]), "#d8d800", 1.5);
})();
```
